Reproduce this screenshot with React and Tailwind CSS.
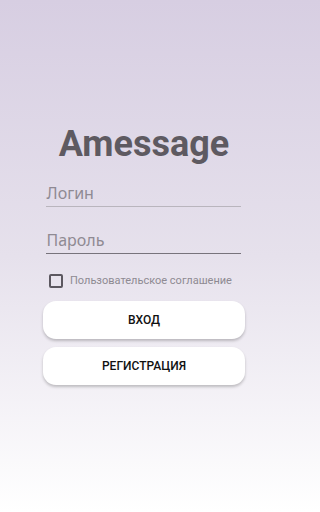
import { useState } from "react";

export default function App() {
  const [agreed, setAgreed] = useState(false);

  return (
    <div className="h-[512px] w-full bg-gradient-to-b from-[#d7cee2] via-[#e6e1ec] to-white">
      <div className="h-full w-[288px] flex flex-col items-center pt-[120px]">
        <h1 className="text-[36px] font-bold text-[#5e5a61] leading-[48px] font-['Roboto',sans-serif]">Amessage</h1>

        <div className="w-[195px] ml-[-2px] mt-[14px] flex flex-col font-['Noto_Sans',sans-serif]">
          <div className="h-[25px] text-[16px] leading-[22px] text-[#8f8a93] pl-[1px] border-b-[1.5px] border-[#b9b5bd]">Логин</div>
          <div className="h-[25px] mt-[22px] text-[16px] leading-[22px] text-[#8f8a93] pl-[1px] border-b-[1.5px] border-[#77737b]">Пароль</div>
        </div>

        <label className="mt-[19px] self-stretch pl-[49px] flex items-center gap-[7px] font-['Roboto',sans-serif]">
          <span
            onClick={() => setAgreed(!agreed)}
            className="w-[14px] h-[14px] rounded-[2px] border-2 border-[#5c5860]"
          />
          <span className="text-[11px] text-[#8e8a92] leading-[16px]">Пользовательское соглашение</span>
        </label>

        <div className="mt-[12px] w-[202px] flex flex-col gap-[8px] font-['Roboto',sans-serif]">
          <button className="h-[38px] rounded-[13px] bg-white shadow-[0_2px_3px_rgba(0,0,0,0.22)] text-[12px] font-medium text-[#111]">ВХОД</button>
          <button className="h-[38px] rounded-[13px] bg-white shadow-[0_2px_3px_rgba(0,0,0,0.22)] text-[12px] font-medium text-[#111]">РЕГИСТРАЦИЯ</button>
        </div>
      </div>
    </div>
  );
}
